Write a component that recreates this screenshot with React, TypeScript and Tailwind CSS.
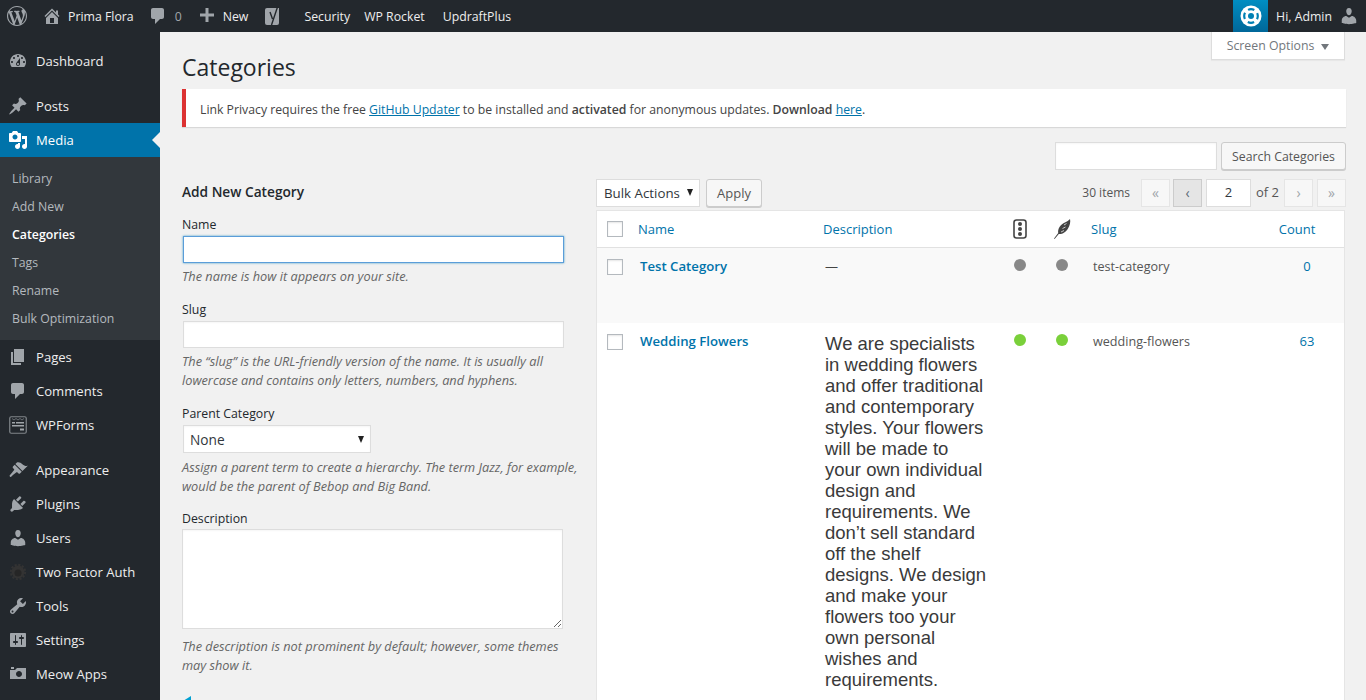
import { ReactNode } from 'react';
import clsx from 'clsx';

const icons = {
  logo: 'M20 10c0-5.51-4.49-10-10-10C4.48 0 0 4.49 0 10c0 5.52 4.48 10 10 10 5.51 0 10-4.48 10-10zM7.78 15.37L4.37 6.22c.55-.02 1.17-.08 1.17-.08.5-.06.44-1.13-.06-1.11 0 0-1.45.11-2.37.11-.18 0-.37 0-.58-.01C4.12 2.69 6.87 1.11 10 1.11c2.33 0 4.45.87 6.05 2.34-.68-.11-1.65.39-1.65 1.58 0 .74.45 1.36.9 2.1.35.61.55 1.36.55 2.46 0 1.49-1.4 5-1.4 5l-3.03-8.37c.54-.02.82-.17.82-.17.5-.05.44-1.25-.06-1.22 0 0-1.44.12-2.38.12-.87 0-2.33-.12-2.33-.12-.5-.03-.56 1.2-.06 1.22l.92.08 1.26 3.41zM17.41 10c.24-.64.74-1.87.43-4.25.7 1.29 1.05 2.71 1.05 4.25 0 3.29-1.73 6.24-4.4 7.78.97-2.59 1.94-5.2 2.92-7.78zM6.1 18.09C3.12 16.65 1.11 13.53 1.11 10c0-1.3.23-2.48.72-3.59C3.25 10.3 4.67 14.2 6.1 18.09zm4.03-6.63l2.58 6.98c-.86.29-1.76.45-2.71.45-.79 0-1.57-.11-2.29-.33.81-2.38 1.62-4.74 2.42-7.1z',
  home: 'M16 8.5l1.53 1.53-1.06 1.06L10 4.62l-6.47 6.47-1.06-1.06L10 2.5l4 4v-2h2v4zm-6-2.46l6 5.99V18H4v-5.97zM12 17v-5H8v5h4z',
  comment: 'M5 2h9c1.1 0 2 .9 2 2v7c0 1.1-.9 2-2 2h-2l-5 5v-5H5c-1.1 0-2-.9-2-2V4c0-1.1.9-2 2-2z',
  plus: 'M17 7.5v3h-5.5V16h-3v-5.5H3v-3h5.5V2h3v5.5z',
  dashboard: 'M3.76 16h12.48c1.1-1.37 1.76-3.11 1.76-5 0-4.42-3.58-8-8-8s-8 3.58-8 8c0 1.89.66 3.63 1.76 5zM10 4c.55 0 1 .45 1 1s-.45 1-1 1-1-.45-1-1 .45-1 1-1zM6 6c.55 0 1 .45 1 1s-.45 1-1 1-1-.45-1-1 .45-1 1-1zm8 0c.55 0 1 .45 1 1s-.45 1-1 1-1-.45-1-1 .45-1 1-1zm-5.37 5.55L12 7v6c0 1.1-.9 2-2 2s-2-.9-2-2c0-.57.24-1.08.63-1.45zM4 10c.55 0 1 .45 1 1s-.45 1-1 1-1-.45-1-1 .45-1 1-1zm12 0c.55 0 1 .45 1 1s-.45 1-1 1-1-.45-1-1 .45-1 1-1zm-5 3c0-.55-.45-1-1-1s-1 .45-1 1 .45 1 1 1 1-.45 1-1z',
  post: 'M10.44 3.02l1.82-1.82 6.36 6.35-1.83 1.82c-1.05-.68-2.48-.57-3.41.36l-.75.75c-.92.93-1.04 2.35-.35 3.41l-1.83 1.82-2.41-2.41-2.8 2.79c-.42.42-3.38 2.71-3.8 2.29s1.86-3.39 2.28-3.81l2.79-2.79L4.1 9.36l1.83-1.82c1.05.69 2.48.57 3.41-.36l.75-.75c.93-.92 1.04-2.35.35-3.41z',
  media: 'M13 11V4c0-.55-.45-1-1-1h-1.67L9 1H5L3.67 3H2c-.55 0-1 .45-1 1v7c0 .55.45 1 1 1h10c.55 0 1-.45 1-1zM7 4.5c1.38 0 2.5 1.12 2.5 2.5S8.38 9.5 7 9.5 4.5 8.38 4.5 7 5.62 4.5 7 4.5zM14 6h5v10.5c0 1.38-1.12 2.5-2.5 2.5S14 17.88 14 16.5s1.12-2.5 2.5-2.5c.17 0 .34.02.5.05V9h-3V6zm-4 8.05V13h2v3.5c0 1.38-1.12 2.5-2.5 2.5S7 17.88 7 16.5 8.12 14 9.5 14c.17 0 .34.02.5.05z',
  page: 'M6 15V2h10v13H6zm-1 1h8v2H3V5h2v11z',
  appearance: 'M14.48 11.06L7.41 3.99l1.5-1.5c.5-.56 2.3-.47 3.51.32 1.21.8 1.43 1.28 2.91 2.1 1.18.64 2.45 1.26 4.45.85zm-.71.71L6.7 4.7 4.93 6.47c-.39.39-.39 1.02 0 1.41l1.06 1.06c.39.39.39 1.03 0 1.42-.6.6-2.9 3.6-4.2 4.9-.8.8.6 2.2 1.4 1.4 1.3-1.3 4.3-3.6 4.9-4.2.39-.39 1.02-.39 1.41 0l1.06 1.06c.39.39 1.02.39 1.41 0z',
  plugin: 'M13.11 4.36L9.87 7.6 8 5.73l3.24-3.24c.35-.34 1.05-.2 1.56.32.52.51.66 1.21.31 1.55zm-8 1.77l.91-1.12 9.01 9.01-1.19.84c-.71.71-2.63 1.16-3.82 1.16H6.14L4.9 17.26c-.59.59-1.54.59-2.12 0-.59-.58-.59-1.53 0-2.12l1.24-1.24v-3.88c0-1.13.4-3.19 1.09-3.89zm7.26 3.97l3.24-3.24c.34-.35 1.04-.21 1.55.31.52.51.66 1.21.31 1.55l-3.24 3.25z',
  users: 'M10 9.25c-2.27 0-2.73-3.44-2.73-3.44C7 4.02 7.82 2 9.97 2c2.16 0 2.98 2.02 2.71 3.81 0 0-.41 3.44-2.68 3.44zm0 2.57L12.72 10c2.39 0 4.52 2.33 4.52 4.53v2.49s-3.65 1.13-7.24 1.13c-3.65 0-7.24-1.13-7.24-1.13v-2.49c0-2.25 1.94-4.48 4.47-4.48z',
  tools: 'M16.68 9.77c-1.34 1.34-3.3 1.67-4.95.99l-5.41 6.52c-.99.99-2.59.99-3.58 0s-.99-2.59 0-3.57l6.52-5.42c-.68-1.65-.35-3.61.99-4.95 1.28-1.28 3.12-1.62 4.72-1.06l-2.89 2.89 2.82 2.82 2.86-2.87c.53 1.58.18 3.39-1.08 4.65zM3.81 16.21c.4.39 1.04.39 1.43 0 .4-.4.4-1.04 0-1.43-.39-.4-1.03-.4-1.43 0-.39.39-.39 1.03 0 1.43z',
  settings: 'M18 16V4c0-.55-.45-1-1-1H3c-.55 0-1 .45-1 1v12c0 .55.45 1 1 1h14c.55 0 1-.45 1-1zM8 11h1c.55 0 1 .45 1 1s-.45 1-1 1H8v1.5c0 .28-.22.5-.5.5s-.5-.22-.5-.5V13H6c-.55 0-1-.45-1-1s.45-1 1-1h1V5.5c0-.28.22-.5.5-.5s.5.22.5.5V11zm5-2h-1c-.55 0-1-.45-1-1s.45-1 1-1h1V5.5c0-.28.22-.5.5-.5s.5.22.5.5V7h1c.55 0 1 .45 1 1s-.45 1-1 1h-1v5.5c0 .28-.22.5-.5.5s-.5-.22-.5-.5V9z',
  camera: 'M6 5V3H3v2h3zm12 10V4H9L7 6H2v9h16zm-7-8c1.66 0 3 1.34 3 3s-1.34 3-3 3-3-1.34-3-3 1.34-3 3-3z',
};

function Dashicon({ d, className }: { d: string; className?: string }) {
  return (
    <svg viewBox="0 0 20 20" className={clsx('shrink-0 fill-current', className)}>
      <path fillRule="evenodd" d={d} />
    </svg>
  );
}

function FormsIcon() {
  return (
    <svg viewBox="0 0 18 18" className="w-[18px] h-[18px] shrink-0 text-[#a0a5aa]" fill="none">
      <rect x="0.75" y="0.75" width="16.5" height="16.5" rx="1.5" stroke="currentColor" strokeWidth="1.2" opacity="0.75" />
      <path d="M3 2.5l2 1.5 2-1.5 2 1.5 2-1.5 2 1.5 2-1.5" stroke="currentColor" strokeWidth="0.8" opacity="0.7" />
      <rect x="3" y="6" width="3" height="1.5" fill="currentColor" />
      <rect x="7" y="6" width="8" height="1.5" fill="currentColor" />
      <rect x="3" y="9" width="12" height="1.5" fill="currentColor" />
      <rect x="11" y="12.5" width="4" height="2" fill="currentColor" />
    </svg>
  );
}

function GearIcon() {
  return (
    <svg viewBox="0 0 18 18" className="w-[18px] h-[18px] shrink-0">
      <circle cx="9" cy="9" r="6.5" fill="#333" />
      <circle cx="9" cy="9" r="7.2" fill="none" stroke="#333" strokeWidth="2" strokeDasharray="2.2 1.57" />
      <circle cx="9" cy="10" r="3.5" fill="#262626" />
    </svg>
  );
}

function YoastIcon() {
  return (
    <svg viewBox="0 0 18 20" className="w-[18px] h-5 shrink-0">
      <path d="M3 2h12v15a2 2 0 0 1-2 2H3a2 2 0 0 1-2-2V4a2 2 0 0 1 2-2z" fill="#a0a5aa" />
      <path d="M6 6l2.5 7M13.5 1l-6 18" fill="none" stroke="#23282d" strokeWidth="1.4" />
    </svg>
  );
}

function HelpRing() {
  return (
    <svg viewBox="0 0 22 22" className="w-[22px] h-[22px]">
      <circle cx="11" cy="11" r="10.5" fill="#fff" />
      <circle cx="11" cy="11" r="6.8" fill="none" stroke="#0080b4" strokeWidth="2.2" strokeDasharray="6.5 4.18" strokeDashoffset="3.25" />
      <circle cx="11" cy="11" r="3" fill="#0080b4" />
    </svg>
  );
}

function TrafficIcon() {
  return (
    <svg viewBox="0 0 14 20" className="w-[14px] h-5 mx-auto text-[#444]">
      <rect x="1" y="1" width="12" height="18" rx="2.5" fill="none" stroke="currentColor" strokeWidth="1.6" />
      <circle cx="7" cy="5" r="2" fill="currentColor" />
      <circle cx="7" cy="10" r="2" fill="currentColor" />
      <circle cx="7" cy="15" r="2" fill="currentColor" />
    </svg>
  );
}

function FeatherIcon() {
  return (
    <svg viewBox="0 0 18 20" className="w-[18px] h-5 mx-auto text-[#444]">
      <path
        fill="currentColor"
        d="M17 0C14.500 3 9.500 3.500 6.500 8C5 10.500 5 12.500 5.200 14L1 19.500L1.600 20L5.800 15C9 15.500 13 13 15 9.500C16.800 6.500 17.800 3 17 0Z"
      />
      <path d="M8 13l3-1.500M9.500 9.500l3-1.500M11 6l2.500-1.500" fill="none" stroke="#fff" strokeWidth="0.7" />
    </svg>
  );
}

type MenuEntry = { label: string; icon: ReactNode; gap?: boolean };

const icon20 = 'w-5 h-5 text-[#a0a5aa]';

const topMenu: MenuEntry[] = [
  { label: 'Pages', icon: <Dashicon d={icons.page} className={icon20} /> },
  { label: 'Comments', icon: <Dashicon d={icons.comment} className={icon20} /> },
  { label: 'WPForms', icon: <FormsIcon /> },
  { label: 'Appearance', icon: <Dashicon d={icons.appearance} className={icon20} />, gap: true },
  { label: 'Plugins', icon: <Dashicon d={icons.plugin} className={icon20} /> },
  { label: 'Users', icon: <Dashicon d={icons.users} className={icon20} /> },
  { label: 'Two Factor Auth', icon: <GearIcon /> },
  { label: 'Tools', icon: <Dashicon d={icons.tools} className={icon20} /> },
  { label: 'Settings', icon: <Dashicon d={icons.settings} className={icon20} /> },
  { label: 'Meow Apps', icon: <Dashicon d={icons.camera} className={icon20} /> },
];

const subMenu = ['Library', 'Add New', 'Categories', 'Tags', 'Rename', 'Bulk Optimization'];

function MenuItem({ label, icon, gap }: MenuEntry) {
  return (
    <div className={clsx('h-[34px] flex items-center text-[13.1px] text-[#eee]', gap && 'mt-[11px]')}>
      <span className="w-9 flex justify-center">{icon}</span>
      <span className="pt-[2px]">{label}</span>
    </div>
  );
}

const barText = 'pt-[2px]';

function AdminBar() {
  return (
    <header className="h-8 shrink-0 bg-[#23282d] flex items-center text-[12.3px] text-[#eee]">
      <Dashicon d={icons.logo} className="w-5 h-5 ml-[7px] text-[#a0a5aa]" />
      <Dashicon d={icons.home} className="w-5 h-5 ml-[15px] text-[#a0a5aa]" />
      <span className={clsx(barText, 'ml-[6px]')}>Prima Flora</span>
      <Dashicon d={icons.comment} className="w-5 h-5 ml-[14px] text-[#a0a5aa]" />
      <span className={clsx(barText, 'ml-[7px] text-[#a0a5aa]')}>0</span>
      <Dashicon d={icons.plus} className="w-5 h-5 ml-[15px] text-[#a0a5aa]" />
      <span className={clsx(barText, 'ml-[6px]')}>New</span>
      <span className="ml-[16px]"><YoastIcon /></span>
      <span className={clsx(barText, 'ml-[22px]')}>Security</span>
      <span className={clsx(barText, 'ml-[14px]')}>WP Rocket</span>
      <span className={clsx(barText, 'ml-[18px]')}>UpdraftPlus</span>
      <div className="ml-auto flex items-center h-full">
        <div className="w-[35px] h-full flex items-center justify-center bg-gradient-to-b from-[#008ec2] to-[#006799]">
          <HelpRing />
        </div>
        <span className={clsx(barText, 'ml-2')}>Hi, Admin</span>
        <Dashicon d={icons.users} className="w-5 h-5 ml-[7px] mr-[7px] text-[#a0a5aa]" />
      </div>
    </header>
  );
}

function Sidebar() {
  return (
    <aside className="w-40 shrink-0 bg-[#23282d] pt-3">
      <MenuItem label="Dashboard" icon={<Dashicon d={icons.dashboard} className={icon20} />} />
      <MenuItem label="Posts" icon={<Dashicon d={icons.post} className={icon20} />} gap />
      <div className="relative h-[34px] bg-[#0073aa] text-white flex items-center text-[13.1px]">
        <span className="w-9 flex justify-center">
          <Dashicon d={icons.media} className="w-5 h-5 text-white" />
        </span>
        <span className="pt-[2px]">Media</span>
        <span className="absolute right-0 top-[9px] border-y-[8px] border-r-[8px] border-y-transparent border-r-[#f1f1f1]" />
      </div>
      <div className="bg-[#32373c] pt-2 pb-[7px] text-[12.3px] text-[#b4b9be]">
        {subMenu.map((item) => (
          <div key={item} className={clsx('h-7 flex items-center pl-3', item === 'Categories' && 'text-white font-semibold')}>
            {item}
          </div>
        ))}
      </div>
      {topMenu.map((item) => (
        <MenuItem key={item.label} {...item} />
      ))}
    </aside>
  );
}

const hint = 'text-[12.75px] leading-[19px] italic text-[#666]';
const label = 'block text-[12.3px] leading-5 text-[#23282d] mt-[14px]';
const field = 'block bg-white border border-[#ddd] shadow-[inset_0_1px_2px_rgba(0,0,0,0.04)]';

function AddForm() {
  return (
    <div className="w-[414px] shrink-0 pr-[17px] pt-3">
      <h2 className="text-[13.7px] leading-5 font-semibold text-[#23282d]">Add New Category</h2>
      <label className={clsx(label, '!mt-[13px]')}>Name</label>
      <input type="text" className="block mt-px ml-px w-[381px] h-[27px] bg-white border border-[#5b9dd9] shadow-[0_0_2px_rgba(30,140,190,0.8)]" />
      <p className={clsx(hint, 'mt-1')}>The name is how it appears on your site.</p>
      <label className={label}>Slug</label>
      <input type="text" className={clsx(field, 'mt-px ml-px w-[381px] h-[27px]')} />
      <p className={clsx(hint, 'mt-1')}>The “slug” is the URL-friendly version of the name. It is usually all lowercase and contains only letters, numbers, and hyphens.</p>
      <label className={label}>Parent Category</label>
      <div className="relative mt-px ml-px w-[188px]">
        <select className={clsx(field, 'appearance-none w-full h-7 pl-[6px] pt-[2px] text-[13.7px] text-[#32373c]')}>
          <option>None</option>
        </select>
        <span className="absolute right-[7px] top-[11px] border-x-[3.5px] border-t-[7px] border-x-transparent border-t-[#222]" />
      </div>
      <p className={clsx(hint, 'mt-[5px]')}>Assign a parent term to create a hierarchy. The term Jazz, for example, would be the parent of Bebop and Big Band.</p>
      <label className={clsx(label, '!mt-[13px]')}>Description</label>
      <textarea className={clsx(field, 'w-[381px] h-[100px] resize')} />
      <p className={clsx(hint, 'mt-2')}>The description is not prominent by default; however, some themes may show it.</p>
      <svg viewBox="0 0 8 8" className="w-2 h-2 mt-[21px] ml-px text-[#00a0d2]">
        <polygon points="8,0 8,8 0,8 0,5" fill="currentColor" />
      </svg>
    </div>
  );
}

const pagerBtn = 'w-[29px] h-7 flex items-center justify-center border text-[14px] leading-none';

function Pager() {
  return (
    <div className="ml-auto flex items-center text-[13px] text-[#555]">
      <span className="mr-[11px] text-[12px]">30 items</span>
      <span className={clsx(pagerBtn, 'bg-[#f7f7f7] border-[#e5e5e5] text-[#a0a5aa]')}>«</span>
      <span className={clsx(pagerBtn, 'ml-[3px] bg-[#e5e5e5] border-[#ccc] text-[#5b6b75]')}>‹</span>
      <span className="ml-1 w-[45px] h-7 flex items-center justify-center bg-white border border-[#ddd] text-[#32373c]">2</span>
      <span className="ml-[5px] mr-[5px]">of 2</span>
      <span className={clsx(pagerBtn, 'bg-[#f7f7f7] border-[#e5e5e5] text-[#a0a5aa]')}>›</span>
      <span className={clsx(pagerBtn, 'ml-1 bg-[#f7f7f7] border-[#e5e5e5] text-[#a0a5aa]')}>»</span>
    </div>
  );
}

function Checkbox() {
  return <span className="block w-4 h-4 bg-white border border-[#b4b9be] shadow-[inset_0_1px_2px_rgba(0,0,0,0.1)]" />;
}

function Dot({ color }: { color: string }) {
  return <span className={clsx('block w-3 h-3 rounded-full mx-auto', color)} />;
}

const description =
  'We are specialists in wedding flowers and offer traditional and contemporary styles. Your flowers will be made to your own individual design and requirements. We don’t sell standard off the shelf designs. We design and make your flowers too your own personal wishes and requirements.';

const rows = [
  { name: 'Test Category', slug: 'test-category', count: 0, dot: 'bg-[#888]', bg: 'bg-[#f9f9f9] h-[75px]' },
  { name: 'Wedding Flowers', slug: 'wedding-flowers', count: 63, dot: 'bg-[#7ad03a]', bg: 'bg-white' },
];

const headCell = 'pt-[2px] border-b border-[#e1e1e1] font-normal';

function CategoryTable() {
  return (
    <table className="mt-[3px] mr-px w-[749px] table-fixed border border-[#e5e5e5] bg-white border-separate border-spacing-0 text-[13px] text-[#555]">
      <colgroup>
        <col className="w-[33px]" />
        <col className="w-[185px]" />
        <col className="w-[185px]" />
        <col className="w-[40px]" />
        <col className="w-[43px]" />
        <col className="w-[187px]" />
        <col className="w-[74px]" />
      </colgroup>
      <thead>
        <tr className="text-left font-normal text-[#0073aa]">
          <th className="h-[37px] pl-[10px] border-b border-[#e1e1e1] font-normal"><Checkbox /></th>
          <th className={clsx(headCell, 'pl-2')}>Name</th>
          <th className={clsx(headCell, 'pl-2')}>Description</th>
          <th className="border-b border-[#e1e1e1] font-normal"><TrafficIcon /></th>
          <th className="border-b border-[#e1e1e1] font-normal"><FeatherIcon /></th>
          <th className={clsx(headCell, 'pl-2')}>Slug</th>
          <th className={clsx(headCell, 'pr-5 text-center')}>Count</th>
        </tr>
      </thead>
      <tbody>
        {rows.map((row) => (
          <tr key={row.slug} className={row.bg}>
            <td className="align-top pl-[10px] pt-[11px]"><Checkbox /></td>
            <td className="align-top pl-[10px] pt-[9px] leading-[18px] text-[13.2px] font-semibold text-[#0073aa]">{row.name}</td>
            <td className="align-top pl-[10px] pr-3 pt-[9px]">
              {row.count === 0 ? (
                <span className="leading-[18px] text-[#444]">—</span>
              ) : (
                <p className="pt-px pb-12 font-['Liberation_Sans',sans-serif] text-[18.5px] leading-[21px] text-[#3a3a3a]">{description}</p>
              )}
            </td>
            <td className="align-top pt-[11px]"><Dot color={row.dot} /></td>
            <td className="align-top pt-[11px]"><Dot color={row.dot} /></td>
            <td className="align-top pl-[10px] pt-[10px] leading-[18px] text-[12.6px]">{row.slug}</td>
            <td className="align-top text-center pt-[9px] leading-[18px] text-[#0073aa]">{row.count}</td>
          </tr>
        ))}
      </tbody>
    </table>
  );
}

export default function App() {
  return (
    <div className="h-[700px] overflow-hidden flex flex-col bg-[#f1f1f1] font-['Open_Sans',sans-serif] text-[13px] text-[#444]">
      <AdminBar />
      <div className="flex flex-1 min-h-0">
        <Sidebar />
        <main className="relative flex-1 pl-[22px] pr-5">
          <div className="absolute top-0 right-[21px] w-[134px] h-7 pt-[2px] flex items-center justify-center gap-[7px] bg-white border-x border-b border-[#ddd] shadow-[0_1px_1px_rgba(0,0,0,0.04)] text-[12.3px] text-[#72777c]">
            Screen Options
            <span className="border-x-[4px] border-t-[6px] border-x-transparent border-t-[#72777c]" />
          </div>

          <h1 className="pt-[21px] text-[23px] leading-[29px] text-[#23282d]">Categories</h1>

          <div className="mt-[7px] h-[38px] pt-1 flex items-center pl-[14px] bg-white border-l-4 border-[#dc3232] shadow-[0_1px_1px_rgba(0,0,0,0.1)] text-[12.25px] text-[#444]">
            <p>
              Link Privacy requires the free <a className="underline text-[#0073aa]">GitHub Updater</a> to be installed and <b className="font-semibold">activated</b> for anonymous updates. <b className="font-semibold">Download</b> <a className="underline text-[#0073aa]">here</a>.
            </p>
          </div>

          <div className="mt-[15px] flex justify-end gap-1">
            <input type="text" className="w-[162px] h-7 bg-white border border-[#ddd] shadow-[inset_0_1px_2px_rgba(0,0,0,0.04)]" />
            <button className="w-[125px] h-7 pt-[2px] bg-[#f7f7f7] border border-[#ccc] rounded-[3px] shadow-[0_1px_0_#ccc] text-[12.3px] text-[#555]">Search Categories</button>
          </div>

          <div className="flex">
            <AddForm />
            <div className="flex-1 pt-[9px]">
              <div className="flex items-center h-7">
                <div className="relative w-[104px] h-7">
                  <select className="appearance-none w-full h-full pl-[7px] pt-[2px] bg-white border border-[#ddd] text-[13.3px] text-[#32373c]">
                    <option>Bulk Actions</option>
                  </select>
                  <span className="absolute right-[7px] top-[10px] border-x-[3.5px] border-t-[7px] border-x-transparent border-t-[#222]" />
                </div>
                <button className="ml-[6px] w-14 h-7 pt-[2px] bg-[#f7f7f7] border border-[#ccc] rounded-[3px] shadow-[0_1px_0_#ccc] text-[13px] text-[#555]">Apply</button>
                <Pager />
              </div>
              <CategoryTable />
            </div>
          </div>
        </main>
      </div>
    </div>
  );
}
